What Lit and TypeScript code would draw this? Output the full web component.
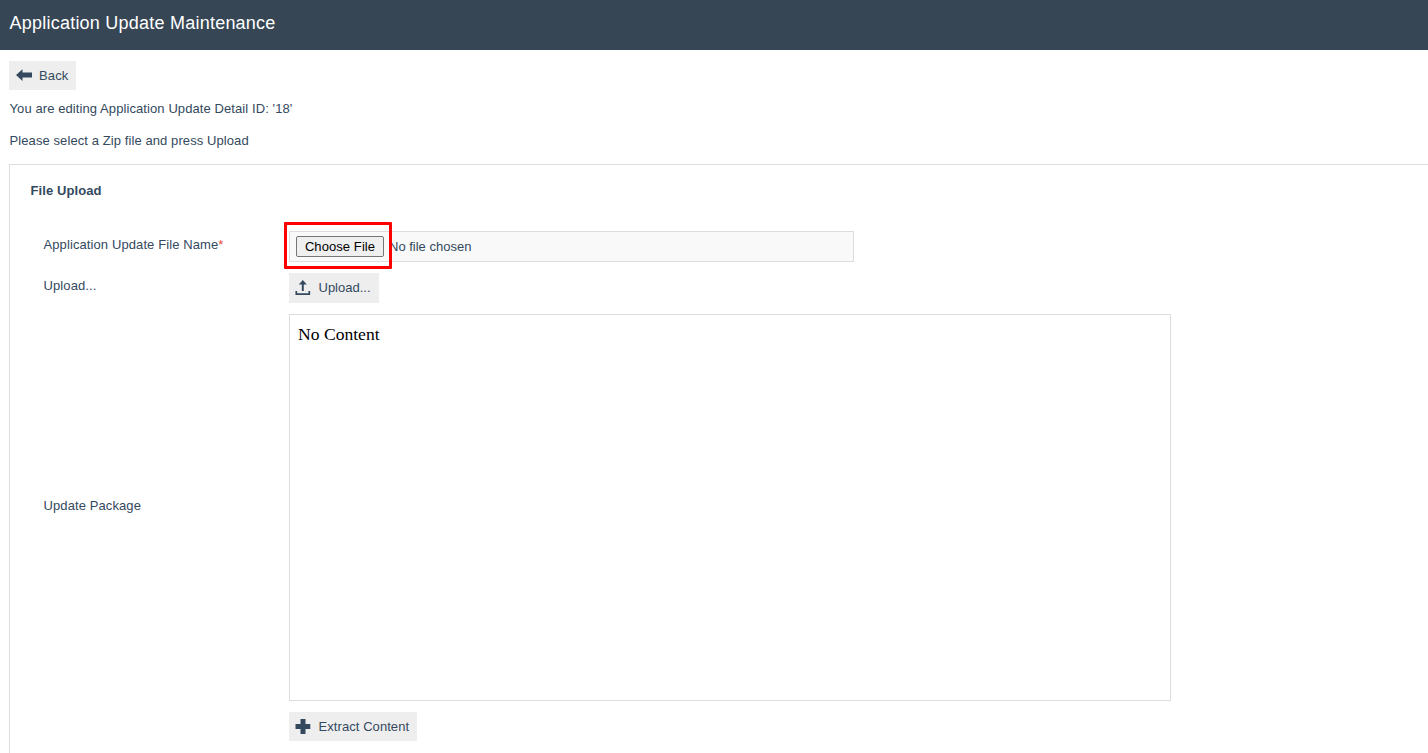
import { LitElement, html, css } from "lit";
import { customElement } from "lit/decorators.js";

@customElement("app-root")
export class AppRoot extends LitElement {
  static styles = css`
    :host {
      display: block;
      height: 753px;
      overflow: hidden;
      background: #fff;
      color: #34495e;
      font: 13px/16px "Liberation Sans", Arial, sans-serif;
    }
    * { box-sizing: border-box; }
    .header {
      height: 50px;
      padding: 11px 9.5px 0;
      background: #364655;
      color: #fff;
      font-size: 18px;
      line-height: 24px;
      font-weight: 400;
      letter-spacing: 0.23px;
      margin: 0;
      white-space: nowrap;
    }
    .content { padding: 11px 0 0 9px; }
    .btn {
      display: flex;
      align-items: center;
      border: 0;
      padding: 0;
      height: 29px;
      background: #eee;
      color: inherit;
      font: inherit;
      white-space: nowrap;
    }
    .btn svg { display: block; flex: none; }
    .back { width: 67px; padding-left: 7px; gap: 7px; letter-spacing: 0.15px; }
    .upload { width: 90px; height: 30px; padding-left: 6px; gap: 7.5px; }
    .extract {
      grid-column: 2;
      width: 128px;
      padding-left: 6px;
      gap: 7.5px;
      letter-spacing: 0.07px;
    }
    .note {
      margin: 11px 0 0;
      height: 16px;
      padding-left: 0.5px;
      letter-spacing: 0.09px;
    }
    .note + .note { margin-top: 16px; }
    .panel {
      margin-top: 15px;
      height: 640px;
      border: 1px solid #ddd;
      border-right: 0;
      padding: 18px 0 0 20px;
    }
    .title {
      margin: 0;
      padding-left: 0.5px;
      font-size: 13px;
      line-height: 16px;
      font-weight: 700;
      letter-spacing: 0.09px;
    }
    .form {
      margin-top: 32px;
      display: grid;
      grid-template-columns: 246px 1fr;
      grid-template-rows: 31px 30px 387px 29px;
      row-gap: 11px;
      padding-left: 13px;
    }
    .label { align-self: center; padding: 0 0 4px 0.5px; letter-spacing: 0.1px; }
    .label.first { padding-bottom: 3px; }
    .label.second { padding-bottom: 5px; }
    .star { color: #e74c3c; }
    .file {
      position: relative;
      width: 565px;
      height: 31px;
      border: 1px solid #ddd;
      background: #f9f9f9;
      display: flex;
      align-items: center;
      padding-left: 6px;
      gap: 5px;
    }
    .choose {
      width: 88px;
      height: 21px;
      border: 1px solid #767676;
      border-radius: 2px;
      background: #efefef;
      color: #000;
      font: inherit;
      letter-spacing: 0.08px;
      padding: 0;
      white-space: nowrap;
    }
    .mark {
      position: absolute;
      left: -6px;
      top: -10px;
      width: 108px;
      height: 47px;
      border: 3px solid #f00;
      border-radius: 1px;
    }
    .frame {
      width: 882px;
      height: 387px;
      border: 1px solid #ddd;
      padding: 9px 8px;
      color: #000;
      font: 17.6px/21px "Liberation Serif", "Times New Roman", serif;
    }
  `;

  render() {
    return html`
      <h1 class="header">Application Update Maintenance</h1>
      <main class="content">
        <button class="btn back">
          <svg width="16" height="13" viewBox="0 0 16 13">
            <path d="M0 6L6.5 .3V3.5H16V8.5H6.5V12Z" fill="#34495e"/>
          </svg><span>Back</span>
        </button>
        <p class="note">You are editing Application Update Detail ID: '18'</p>
        <p class="note">Please select a Zip file and press Upload</p>
        <section class="panel">
          <h2 class="title">File Upload</h2>
          <div class="form">
            <div class="label first">Application Update File Name<span class="star">*</span></div>
            <div class="file">
              <button class="choose">Choose File</button><span>No file chosen</span>
              <div class="mark"></div>
            </div>
            <div class="label second">Upload...</div>
            <button class="btn upload">
              <svg width="16" height="16" viewBox="0 0 16 16">
                <path d="M1.3 11V14.2H14.3V11" fill="none" stroke="#34495e" stroke-width="1.7"/>
                <path d="M7.8 0L11.8 4.5H8.8V11H6.8V4.5H3.8Z" fill="#34495e"/>
              </svg><span>Upload...</span>
            </button>
            <div class="label">Update Package</div>
            <div class="frame">No Content</div>
            <button class="btn extract">
              <svg width="16" height="16" viewBox="0 0 16 16">
                <path d="M5.5 0H10.5V5H15.3V10H10.5V15H5.5V10H.5V5H5.5Z" fill="#34495e"/>
              </svg><span>Extract Content</span>
            </button>
          </div>
        </section>
      </main>
    `;
  }
}
